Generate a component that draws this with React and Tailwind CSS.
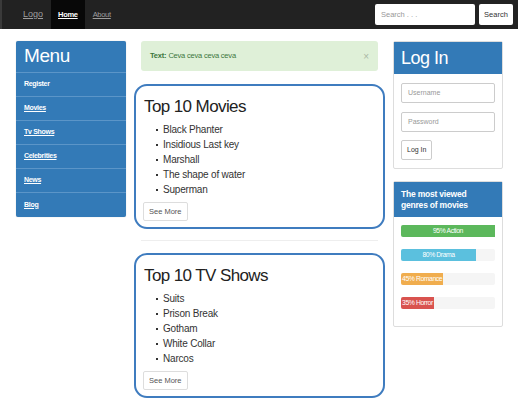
import React from "react";

const menu = ["Register", "Movies", "Tv Shows", "Celebrities", "News", "Blog"];
const movies = ["Black Phanter", "Insidious Last key", "Marshall", "The shape of water", "Superman"];
const shows = ["Suits", "Prison Break", "Gotham", "White Collar", "Narcos"];
const genres = [
  { label: "95% Action", pct: 100, color: "bg-[#5cb85c]" },
  { label: "80% Drama", pct: 80, color: "bg-[#5bc0de]" },
  { label: "45% Romance", pct: 45, color: "bg-[#f0ad4e]" },
  { label: "35% Horror", pct: 35, color: "bg-[#d9534f]" },
];

const TopCard = ({ title, items }) => (
  <div className="rounded-[13px] border-2 border-[#3f7cbf] bg-white px-[7px] pt-[9px] pb-[6px]">
    <h2 className="ml-[1px] text-[17px] leading-[24px] tracking-[-0.6px] text-[#222]">{title}</h2>
    <ul className="mt-[3px] pl-[13px]">
      {items.map((m) => (
        <li key={m} className="flex items-center text-[10px] leading-[15px] tracking-[-0.2px] text-[#333]">
          <span className="mr-[5px] inline-block h-[2px] w-[2px] bg-[#333]" />
          {m}
        </li>
      ))}
    </ul>
    <button className="mt-[5px] h-[19px] rounded-[2px] border border-[#ddd] bg-white px-[5px] text-[7.5px] text-[#555]">
      See More
    </button>
  </div>
);

export default function App() {
  return (
    <div className="min-h-[414px] w-[522px] bg-white font-['Liberation_Sans',Arial,sans-serif]">
      <nav className="flex h-[29px] w-[518px] items-center border-l-2 border-[#3a3a3a] bg-[#222]">
        <a className="ml-[21px] text-[9px] text-[#9d9d9d] underline">Logo</a>
        <div className="ml-[8px] flex h-full items-center bg-[#080808] px-[7px] text-[7.5px] font-bold tracking-[-0.3px] text-white underline">
          Home
        </div>
        <a className="ml-[8px] text-[7.5px] tracking-[-0.3px] text-[#9d9d9d] underline">About</a>
        <div className="ml-auto mr-[5px] flex items-center gap-[4px]">
          <div className="flex h-[21px] w-[100px] items-center rounded-[2px] bg-white pl-[6px] text-[7.5px] text-[#999]">
            Search . . .
          </div>
          <button className="h-[21px] w-[34px] rounded-[2px] bg-white text-[7.5px] text-[#333]">Search</button>
        </div>
      </nav>

      <div className="flex items-start gap-[8px] pl-[16px] pt-[12px]">
        <div className="w-[110px] rounded-[2px] bg-[#337ab7] shadow-[0_0_1px_rgba(0,0,0,0.3)]">
          <div className="flex h-[32px] items-center border-b border-[#5b95c8] px-[8px] text-[19px] tracking-[-0.4px] text-white">Menu</div>
          {menu.map((m, i) => (
            <div
              key={m}
              className={`flex h-[24px] items-center px-[8px] text-[7px] font-bold tracking-[-0.3px] text-white ${i === 0 ? "" : "underline"} ${i < menu.length - 1 ? "border-b border-[#5b95c8]" : ""}`}
            >
              {m}
            </div>
          ))}
        </div>

        <div className="w-[251px]">
          <div className="mx-[7px] flex h-[30px] items-center rounded-[3px] bg-[#dff0d8] px-[9px] text-[7.5px] tracking-[-0.2px] text-[#3c763d]">
            <span className="font-bold">Text:</span>
            <span className="ml-[2px]">Ceva ceva ceva ceva</span>
            <span className="ml-auto text-[10px] text-[#aab8a5]">×</span>
          </div>
          <div className="mt-[13px]">
            <TopCard title="Top 10 Movies" items={movies} />
          </div>
          <div className="mx-[7px] mt-[11px] border-t border-[#eee]" />
          <div className="mt-[12px]">
            <TopCard title="Top 10 TV Shows" items={shows} />
          </div>
        </div>

        <div className="w-[110px]">
          <div className="rounded-[2px] border border-[#ddd] bg-white">
            <div className="flex h-[32px] items-center bg-[#337ab7] px-[7px] text-[18px] tracking-[-0.5px] text-white">Log In</div>
            <div className="px-[7px] pt-[9px] pb-[8px]">
              <div className="flex h-[20px] items-center rounded-[2px] border border-[#ccc] px-[6px] text-[7px] text-[#999]">Username</div>
              <div className="mt-[9px] flex h-[20px] items-center rounded-[2px] border border-[#ccc] px-[6px] text-[7px] text-[#999]">Password</div>
              <button className="mt-[8px] h-[20px] rounded-[2px] border border-[#ccc] bg-white px-[5px] text-[7px] text-[#333]">Log In</button>
            </div>
          </div>

          <div className="mt-[12px] rounded-[2px] border border-[#ddd] bg-white">
            <div className="bg-[#337ab7] px-[7px] pt-[7px] pb-[6px] text-[8.5px] font-bold leading-[11px] tracking-[-0.2px] text-white">
              The most viewed genres of movies
            </div>
            <div className="px-[7px] pt-[8px] pb-[17px]">
              {genres.map((g, i) => (
                <div key={g.label} className={`h-[12px] rounded-[2px] bg-[#f5f5f5] ${i ? "mt-[12px]" : ""}`}>
                  <div
                    className={`flex h-full items-center justify-center overflow-visible whitespace-nowrap rounded-l-[2px] text-[6.8px] tracking-[-0.4px] text-white ${g.color}`}
                    style={{ width: `${g.pct}%` }}
                  >
                    {g.label}
                  </div>
                </div>
              ))}
            </div>
          </div>
        </div>
      </div>
    </div>
  );
}
